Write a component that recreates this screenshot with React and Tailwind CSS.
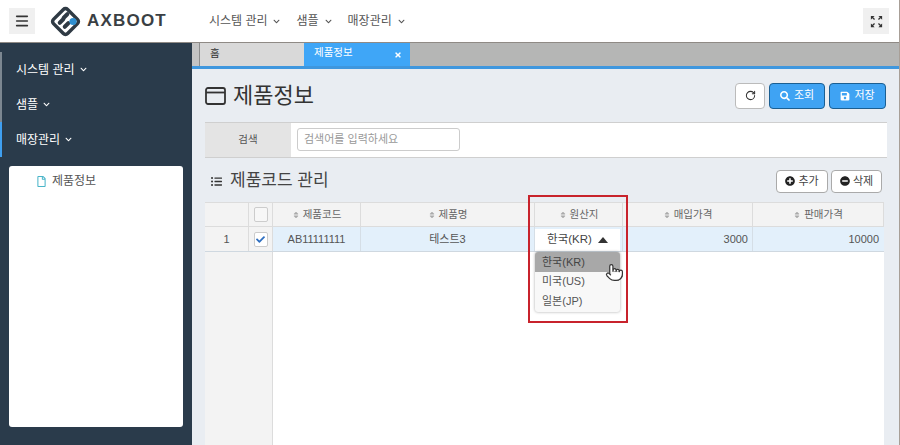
import React from "react";
import { FaCheck, FaChevronDown, FaListUl, FaMinusCircle, FaPlusCircle, FaRegFile, FaSave, FaSearch, FaSort, FaTimes } from "react-icons/fa";
import { MdZoomOutMap } from "react-icons/md";
import { Menu, RotateCw, Pointer } from "lucide-react";

const font = { fontFamily: '"Liberation Sans", "Noto Sans CJK KR", sans-serif' };

const Logo = () => (
  <svg width="31" height="31" viewBox="0 0 31 31">
    <rect x="5.5" y="5.5" width="20" height="20" rx="3" transform="rotate(45 15.5 15.5)" fill="none" stroke="#2f3a44" strokeWidth="3.5" />
    <rect x="7" y="13" width="9" height="4" rx="2" transform="rotate(-45 11.5 15)" fill="#2f3a44" />
    <rect x="11" y="8" width="9" height="4" rx="2" transform="rotate(-45 15.5 10)" fill="#2f3a44" />
    <rect x="12" y="17" width="9" height="4" rx="2" transform="rotate(-45 16.5 19)" fill="#2f3a44" />
    <circle cx="23" cy="15.5" r="3.6" fill="#2f8fd0" />
  </svg>
);

const WindowIcon = () => (
  <svg width="21" height="18" viewBox="0 0 21 18" fill="none" stroke="#333" strokeWidth="1.8">
    <rect x="1" y="1" width="19" height="16" rx="2" />
    <path d="M1 5.5h19" />
  </svg>
);

const TopMenu = ({ label }) => (
  <span className="flex items-center gap-[6px] text-[12px] text-[#555]">
    {label} <FaChevronDown className="text-[7px]" />
  </span>
);

const SideMenu = ({ label }) => (
  <div className="h-[35px] flex items-center gap-[5px] pl-[16px] text-[12px] text-white">
    {label} <FaChevronDown className="text-[7px]" />
  </div>
);

const HeadCell = ({ w, label }) => (
  <div className={`${w} flex items-center justify-center gap-[3px] border-r border-[#dcdcdc] text-[#666] text-[10.5px]`}>
    <FaSort className="text-[8px] text-[#aaa]" /> {label}
  </div>
);

export default function App() {
  return (
    <div className="w-[900px] h-[445px] overflow-hidden flex flex-col bg-white border-r border-[#a89f97]" style={font}>
      <header className="h-[43px] shrink-0 flex items-center bg-white pl-[9px] pr-[10px] border-b border-[#8f8a85]">
        <button className="w-[26px] h-[26px] bg-[#f0f0f0] flex items-center justify-center text-[#333]">
          <Menu size={16} strokeWidth={2.4} />
        </button>
        <div className="ml-[15px]"><Logo /></div>
        <span className="ml-[6px] text-[17px] font-bold tracking-[1.2px] text-[#3a3f44]">AXBOOT</span>
        <nav className="ml-[42px] flex gap-[16px]">
          <TopMenu label="시스템 관리" />
          <TopMenu label="샘플" />
          <TopMenu label="매장관리" />
        </nav>
        <button className="ml-auto w-[26px] h-[26px] bg-[#f0f0f0] flex items-center justify-center text-[#333]">
          <MdZoomOutMap size={15} />
        </button>
      </header>

      <div className="flex flex-1 min-h-0">
        <aside className="w-[192px] shrink-0 bg-[#2a3b4b] flex flex-col pt-[9px] relative">
          <div className="absolute left-0 top-[9px] w-[2px] h-[70px] bg-[#7c8791]" />
          <div className="absolute left-0 top-[79px] w-[2px] h-[35px] bg-[#3f9ff0]" />
          <SideMenu label="시스템 관리" />
          <SideMenu label="샘플" />
          <SideMenu label="매장관리" />
          <div className="mt-[9px] ml-[9px] w-[174px] h-[261px] bg-white rounded-[3px] pl-[27px] pt-[6px] flex items-start gap-[5px] text-[12px] text-[#555]">
            <FaRegFile className="text-[11px] text-[#4ab5c9] mt-[4px]" /> 제품정보
          </div>
        </aside>

        <main className="flex-1 min-w-0 bg-[#e9edf2] flex flex-col">
          <div className="h-[26px] shrink-0 flex bg-[#b5b6b5] border-b-[3px] border-[#3f97de]">
            <div className="w-[8px] bg-[#c4c4c4] border-r border-[#8d8d8d]" />
            <div className="w-[104px] bg-[#d9d9d9] pl-[10px] text-[10.5px] text-[#333] leading-[21px]">홈</div>
            <div className="w-[106px] bg-[#3fa6f7] flex items-start justify-between pl-[10px] pr-[8px] text-[10.5px] text-white leading-[18px]">
              제품정보 <FaTimes className="text-[8px] mt-[8px]" />
            </div>
          </div>

          <div className="flex-1 relative pl-[13px] pr-[13px]">
            <div className="flex items-center h-[53px]">
              <WindowIcon />
              <h1 className="ml-[7px] text-[22px] text-[#333]">제품정보</h1>
              <div className="ml-auto flex gap-[4px] text-[11px]">
                <button className="w-[30px] h-[26px] bg-white border border-[#bbb] rounded-[4px] flex items-center justify-center text-[#333]">
                  <RotateCw size={11} strokeWidth={2.2} />
                </button>
                <button className="w-[56px] h-[26px] bg-[#3fa3f3] border border-[#1b5f92] rounded-[4px] flex items-center justify-center gap-[4px] text-white">
                  <FaSearch className="text-[10px]" /> 조회
                </button>
                <button className="w-[57px] h-[26px] bg-[#3fa3f3] border border-[#1b5f92] rounded-[4px] flex items-center justify-center gap-[4px] text-white">
                  <FaSave className="text-[10px]" /> 저장
                </button>
              </div>
            </div>

            <div className="h-[36px] w-[682px] flex bg-white border-y border-[#cfcfcf]">
              <div className="w-[86px] bg-[#e4e4e4] flex items-center justify-center text-[10.5px] text-[#555]">검색</div>
              <div className="ml-[6px] mt-[5px] w-[163px] h-[23px] border border-[#ccc] rounded-[3px] pl-[6px] flex items-center text-[11px] text-[#999]">
                검색어를 입력하세요
              </div>
            </div>

            <div className="h-[44px] flex items-center pl-[6px] pt-[2px] w-[677px]">
              <FaListUl className="text-[11px] text-[#333]" />
              <h2 className="ml-[8px] text-[17px] text-[#444]">제품코드 관리</h2>
              <div className="ml-auto flex gap-[3px] text-[11px] text-[#444]">
                <button className="w-[52px] h-[23px] bg-white border border-[#aaa] rounded-[4px] flex items-center justify-center gap-[3px]">
                  <FaPlusCircle className="text-[10px] text-[#222]" /> 추가
                </button>
                <button className="w-[51px] h-[23px] bg-white border border-[#aaa] rounded-[4px] flex items-center justify-center gap-[3px]">
                  <FaMinusCircle className="text-[10px] text-[#222]" /> 삭제
                </button>
              </div>
            </div>

            <div className="w-[679px] h-[244px] bg-white flex flex-col">
              <div className="h-[25px] flex bg-[#f3f3f3] border-y border-[#dcdcdc]">
                <div className="w-[44px] border-r border-[#dcdcdc]" />
                <div className="w-[24px] border-r border-[#dcdcdc] flex items-center justify-center">
                  <div className="w-[14px] h-[15px] bg-[#f7f7f7] border border-[#ccc] rounded-[2px]" />
                </div>
                <HeadCell w="w-[88px]" label="제품코드" />
                <HeadCell w="w-[174px]" label="제품명" />
                <HeadCell w="w-[88px]" label="원산지" />
                <HeadCell w="w-[130px]" label="매입가격" />
                <HeadCell w="w-[131px]" label="판매가격" />
              </div>
              <div className="h-[25px] flex bg-[#e3f0fb] border-b border-[#cfd8e0] text-[11px] text-[#555]">
                <div className="w-[44px] bg-[#f3f3f3] border-r border-[#dcdcdc] flex items-center justify-center">1</div>
                <div className="w-[24px] bg-[#f3f3f3] border-r border-[#dcdcdc] flex items-center justify-center">
                  <div className="w-[14px] h-[15px] bg-white border border-[#ccc] rounded-[2px] flex items-center justify-center">
                    <FaCheck className="text-[9px] text-[#2f6fc0]" />
                  </div>
                </div>
                <div className="w-[88px] border-r border-[#d5dee6] flex items-center justify-center">AB11111111</div>
                <div className="w-[174px] border-r border-[#d5dee6] flex items-center justify-center">테스트3</div>
                <div className="w-[88px] border-r border-[#d5dee6]" />
                <div className="w-[130px] border-r border-[#d5dee6] flex items-center justify-end pr-[4px]">3000</div>
                <div className="w-[131px] flex items-center justify-end pr-[5px]">10000</div>
              </div>
              <div className="flex-1 flex">
                <div className="w-[68px] bg-[#f3f3f3] border-r border-[#dcdcdc]" />
              </div>
            </div>

            {/* select opened in the grid cell */}
            <div className="absolute left-[343px] top-[160px] w-[85px] text-[11.5px] text-[#444]">
              <div className="h-[22px] bg-white flex items-center justify-center gap-[6px]">
                한국(KR) <span className="w-0 h-0 border-x-[5px] border-x-transparent border-b-[6px] border-b-[#333]" />
              </div>
              <div className="mt-[1px] h-[60px] bg-[#f8f8f8] rounded-[3px] shadow-[0_0_3px_rgba(0,0,0,0.35)] text-[11px] text-[#555]">
                <div className="h-[20px] bg-[#a8a8a8] rounded-t-[3px] pl-[7px] flex items-center text-[#444]">한국(KR)</div>
                <div className="h-[19px] pl-[7px] flex items-center">미국(US)</div>
                <div className="h-[20px] pl-[7px] flex items-center">일본(JP)</div>
              </div>
            </div>
            <div className="absolute left-[336px] top-[126px] w-[100px] h-[128px] border-2 border-[#c8232c]" />
            <Pointer className="absolute left-[413px] top-[194px]" size={19} fill="#fff" stroke="#333" strokeWidth={1.5} />
          </div>
        </main>
      </div>
    </div>
  );
}
